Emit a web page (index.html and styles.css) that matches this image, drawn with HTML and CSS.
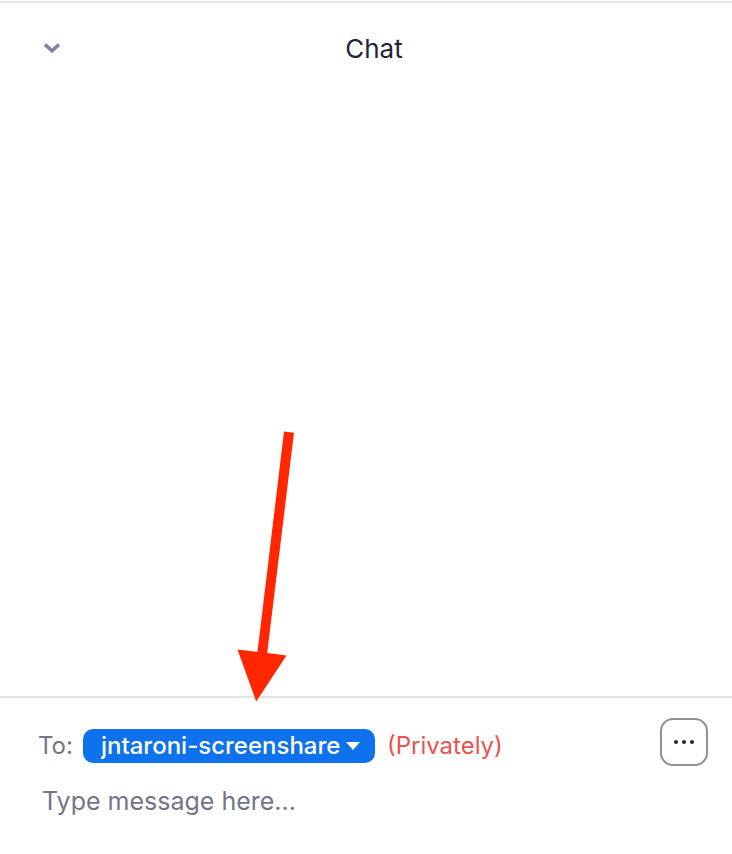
FILE: index.html
```html
<!DOCTYPE html>
<html lang="en">
<head>
<meta charset="utf-8">
<meta name="viewport" content="width=device-width, initial-scale=1">
<title>Chat</title>
<link rel="stylesheet" href="styles.css">
</head>
<body>
<header class="header">
  <button class="collapse" type="button" aria-label="Collapse chat">
    <svg width="20" height="14" viewBox="0 0 20 14" aria-hidden="true"><path d="M3 2.500 10 8.800 17 2.500" fill="none" stroke="#85839a" stroke-width="3.6"/></svg>
  </button>
  <h1 class="title">Chat</h1>
</header>
<main class="messages"></main>
<form class="composer">
  <svg class="pointer" width="57" height="272" viewBox="0 0 57 272" aria-hidden="true"><path d="M47 1.500 57 2.800 30.200 223 49.500 225.500 19.200 271.500 0.500 219.500 20.500 221.800Z" fill="#ff2600"/></svg>
  <div class="toolbar">
    <div class="recipient">
      <label class="to" for="recipient">To:</label>
      <span class="picker">
        <select class="select" id="recipient"><option>jntaroni-screenshare</option></select>
        <svg class="caret" width="14" height="8" viewBox="0 0 14 8" aria-hidden="true"><path d="M0 0H14L7 8Z" fill="#fff"/></svg>
      </span>
      <span class="private">(Privately)</span>
    </div>
    <button class="more" type="button" aria-label="More options">
      <svg width="20" height="4" viewBox="0 0 20 4" aria-hidden="true"><g fill="#232333"><circle cx="2" cy="2" r="2"/><circle cx="10" cy="2" r="2"/><circle cx="18" cy="2" r="2"/></g></svg>
    </button>
  </div>
  <input class="message" type="text" placeholder="Type message here..." aria-label="Message">
</form>
</body>
</html>
```

FILE: styles.css
```css
* {
  box-sizing: border-box;
}

body {
  display: flex;
  flex-direction: column;
  min-height: 100vh;
  margin: 0;
  padding-top: 1px;
  background: #fff;
  color: #232333;
  font: 24px/32px Inter, "Liberation Sans", sans-serif;
}

button,
select,
input {
  margin: 0;
  padding: 0;
  border: 0;
  background: none;
  font: inherit;
}

svg {
  display: block;
}

.header {
  display: grid;
  grid-template-columns: 20px 1fr 20px;
  align-items: center;
  padding: 30px 42px;
  border-top: 2px solid #e4e4e4;
}

.title {
  margin: 0;
  padding-left: 16px;
  font-size: 26px;
  font-weight: 400;
  text-align: center;
}

.messages {
  flex: 1;
}

.composer {
  position: relative;
  padding: 20px 24px 36px 38px;
  border-top: 2px solid #e4e4e4;
}

.pointer {
  position: absolute;
  left: 237px;
  bottom: calc(100% - 4px);
}

.toolbar {
  display: flex;
  align-items: center;
  justify-content: space-between;
}

.recipient {
  display: flex;
  align-items: center;
  gap: 12px;
  padding-top: 8px;
}

.to {
  margin-right: -2px;
  color: #747487;
}

.picker {
  position: relative;
}

.select {
  display: block;
  height: 34px;
  padding: 0 34px 0 18px;
  border-radius: 10px;
  appearance: none;
  background: #0e72ed;
  color: #fff;
  font-weight: 500;
}

.caret {
  position: absolute;
  top: 13px;
  right: 15px;
  pointer-events: none;
}

.private {
  color: #e8524f;
}

.more {
  display: grid;
  place-items: center;
  width: 48px;
  height: 48px;
  border: 2px solid #909096;
  border-radius: 13px;
}

.message {
  display: block;
  width: 100%;
  height: 34px;
  margin-top: 18px;
  padding-left: 4px;
  font-size: 25px;
}

.message::placeholder {
  color: #747487;
  opacity: 1;
}
```
